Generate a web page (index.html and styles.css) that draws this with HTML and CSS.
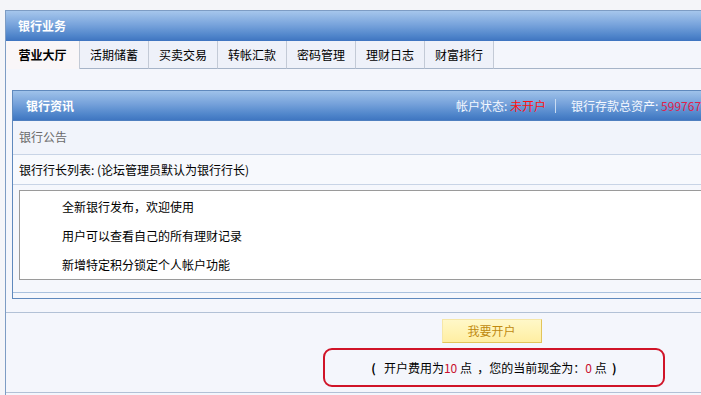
FILE: index.html
```html
<!DOCTYPE html>
<html lang="zh-CN">
<head>
<meta charset="utf-8">
<title>银行业务</title>
<link rel="stylesheet" href="styles.css">
</head>
<body>
<div class="outer">
  <div class="outer-head">银行业务</div>
  <div class="tabs">
    <div class="tab active">营业大厅</div>
    <div class="tab">活期储蓄</div>
    <div class="tab">买卖交易</div>
    <div class="tab">转帐汇款</div>
    <div class="tab">密码管理</div>
    <div class="tab">理财日志</div>
    <div class="tab">财富排行</div>
    <div class="tab-fill"></div>
  </div>
  <div class="tab-body">
    <div class="panel">
      <div class="panel-head">
        <span class="panel-title">银行资讯</span>
        <span class="status">帐户状态: <span class="red">未开户</span><span class="sep"></span>银行存款总资产: <span class="red2">599767695</span> 点</span>
      </div>
      <div class="row notice">银行公告</div>
      <div class="row">银行行长列表: (论坛管理员默认为银行行长)</div>
      <div class="list">
        <div class="item">全新银行发布，欢迎使用</div>
        <div class="item">用户可以查看自己的所有理财记录</div>
        <div class="item">新增特定积分锁定个人帐户功能</div>
      </div>
      <div class="panel-foot"></div>
    </div>
  </div>
  <div class="footer">
    <div class="btn">我要开户</div>
    <div class="fee"><span class="fee-text"><b class="paren">(</b>&nbsp;&nbsp; 开户费用为<span class="num">10</span> 点 &nbsp;，您的当前现金为：<span class="num">0</span> 点 &nbsp;<b class="paren">)</b></span></div>
  </div>
  <div class="outer-end"></div>
</div>
</body>
</html>
```
FILE: styles.css
```css
html, body {
  margin: 0;
  padding: 0;
}
body {
  background: #f4f5f9;
  padding: 10px 0 0 5px;
  overflow: hidden;
  font-family: "Noto Sans CJK SC", "DejaVu Sans", sans-serif;
  font-size: 12px;
  color: #000;
}
.outer {
  width: 971px;
  border: 1px solid #7d9cc4;
  background: #f4f6fc;
}
.outer-head {
  height: 30px;
  line-height: 30px;
  padding-left: 12px;
  color: #fff;
  font-weight: bold;
  background: linear-gradient(#a6c6ec, #79a4dc 45%, #5287cc 80%, #3e74c0);
}
.tabs {
  display: flex;
  height: 28px;
  background: #f4f6fc;
}
.tab {
  width: 68px;
  height: 27px;
  line-height: 27px;
  text-align: center;
  background: #eef1f9;
  border-right: 1px solid #c3cad6;
  border-bottom: 1px solid #a6b4c8;
  color: #000;
}
.tab.active {
  width: 73px;
  height: 28px;
  border-bottom: none;
  background: #f9f6f8;
  font-weight: bold;
}
.tab-fill {
  flex: 1;
  border-bottom: 1px solid #a6b4c8;
}
.tab-body {
  padding: 21px 0 13px 6px;
  border-bottom: 1px solid #b2c1d6;
}
.panel {
  width: 957px;
  border: 1px solid #5f89bd;
  background: #f5f7fc;
}
.panel-head {
  display: flex;
  height: 29px;
  line-height: 29px;
  padding-left: 13px;
  color: #fff;
  border-bottom: 1px solid #4f7fbf;
  background: linear-gradient(#9fc2ea, #75a1da 45%, #5086cb 80%, #3f76c1);
}
.panel-title {
  font-weight: bold;
  width: 48px;
}
.status {
  margin-left: 382px;
  color: #f4f8ff;
  white-space: nowrap;
}
.red {
  color: #ff1010;
}
.red2 {
  color: #e0204a;
}
.sep {
  display: inline-block;
  width: 1px;
  height: 14px;
  margin: 0 15px 0 9px;
  vertical-align: -2px;
  background: #c9dbf2;
}
.row {
  height: 29px;
  line-height: 29px;
  padding-left: 6px;
  border-bottom: 1px solid #c8d4e6;
  background: #f7f9fd;
}
.row.notice {
  height: 33px;
  line-height: 31px;
  color: #6a6a6a;
  background: #f1f4fb;
}
.list {
  margin: 5px 0 0 6px;
  border: 1px solid #9a9a9a;
  background: #fff;
  padding: 1px 0 0 42px;
}
.item {
  height: 29px;
  line-height: 29px;
}
.panel-foot {
  margin-top: 12px;
  height: 5px;
  border-top: 1px solid #a9c1de;
}
.footer {
  height: 73px;
  border-bottom: 1px solid #b2c1d6;
  text-align: center;
}
.btn {
  display: block;
  width: 98px;
  height: 22px;
  line-height: 22px;
  margin: 6px auto 0;
  background: linear-gradient(#fff8c8, #ffeea2);
  border: 1px solid #f6e7a8;
  border-right-color: #e2c45a;
  border-bottom-color: #e2c45a;
  color: #c08a10;
}
.fee {
  margin-top: 5px;
}
.fee-text {
  display: inline-block;
  box-sizing: border-box;
  width: 342px;
  height: 39px;
  line-height: 35px;
  margin-left: 5px;
  border: 2px solid #d01428;
  border-radius: 9px;
  color: #000;
}
.paren {
  font-weight: bold;
}
.num {
  color: #c8102e;
}
.outer-end {
  height: 5px;
}
```
